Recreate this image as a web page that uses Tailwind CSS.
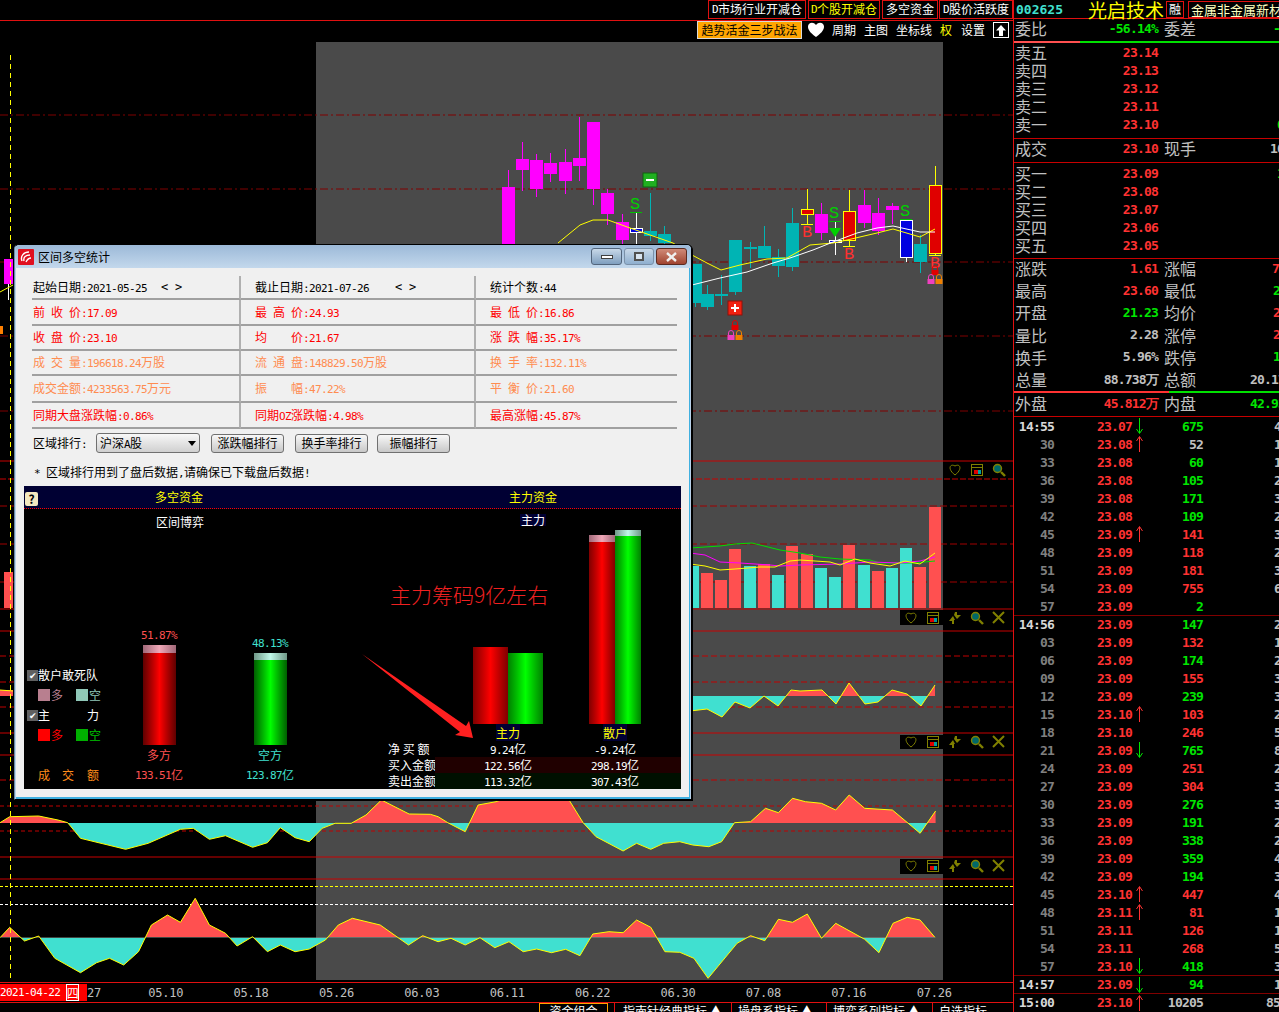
<!DOCTYPE html>
<html lang="zh">
<head>
<meta charset="UTF-8" />
<title>区间多空统计</title>
<script src="https://cdn.jsdelivr.net/npm/@tailwindcss/browser@4"></script>
</head>
<body class="bg-black overflow-hidden font-['Noto_Sans_CJK_SC',sans-serif] text-[12px] leading-none">
<div class="relative w-[1279px] h-[1012px] flex overflow-hidden">

  <!-- left: tabs, toolbar, chart, axis -->
  <div class="w-[1013px] flex flex-col shrink-0">
    <div class="h-[21px] border-b border-[#e01010] flex justify-end items-start text-white">
      <div data-sim class="w-[98px] h-[19px] pb-[1px] border border-[#e01010] flex items-center justify-center">D市场行业开减仓</div>
      <div data-sim class="w-[72px] h-[19px] pb-[1px] ml-[2px] border border-[#e01010] flex items-center justify-center text-[#ffff00]">D个股开减仓</div>
      <div data-sim class="w-[56px] h-[19px] pb-[1px] ml-[2px] border border-[#e01010] flex items-center justify-center">多空资金</div>
      <div data-sim class="w-[74px] h-[19px] pb-[1px] ml-[1px] border border-[#e01010] flex items-center justify-center">D股价活跃度</div>
    </div>
    <div class="h-[21px] pb-[3px] flex items-center justify-end pr-[4px] text-white">
      <div class="w-[105px] h-[18px] bg-[#ffa500] border border-[#d8d8d8] text-black flex items-center justify-center">趋势活金三步战法</div>
      <svg class="ml-[6px]" width="16" height="16" viewBox="0 0 16 16"><path d="M8 15C1 10 0 7 0 4.5C0 1 5 -1 8 3C11 -1 16 1 16 4.5C16 7 15 10 8 15Z" fill="#fff"/></svg>
      <span class="ml-[8px]">周期</span>
      <span class="ml-[8px]">主图</span>
      <span class="ml-[8px]">坐标线</span>
      <span class="ml-[8px] text-[#ffff00]">权</span>
      <span class="ml-[9px]">设置</span>
      <div class="ml-[8px] w-[16px] h-[16px] border border-white flex items-center justify-center">
        <svg width="10" height="11" viewBox="0 0 10 11"><path d="M5 0L10 5.5H7V11H3V5.5H0Z" fill="#fff"/></svg>
      </div>
    </div>
    <svg id="chart" class="block" width="1013" height="940" viewBox="0 42 1013 940"></svg>
    <div class="h-[20px] border-t border-[#e01010] flex items-center text-[#c0c0c0] font-['DejaVu_Sans_Mono',monospace] tracking-[-0.2px]">
      <div class="w-[87px] h-[17px] bg-[#ff0000] text-white flex items-center pl-[0px] tracking-[-0.6px] text-[11px]">2021-04-22<span class="ml-[6px] w-[13px] h-[17px] border border-white flex items-center justify-center font-['Noto_Sans_CJK_SC',sans-serif] tracking-normal text-[12px]">四</span></div>
      <div class="w-[36px]">27</div>
      <div class="w-[85.4px] text-center">05.10</div>
      <div class="w-[85.4px] text-center">05.18</div>
      <div class="w-[85.4px] text-center">05.26</div>
      <div class="w-[85.4px] text-center">06.03</div>
      <div class="w-[85.4px] text-center">06.11</div>
      <div class="w-[85.4px] text-center">06.22</div>
      <div class="w-[85.4px] text-center">06.30</div>
      <div class="w-[85.4px] text-center">07.08</div>
      <div class="w-[85.4px] text-center">07.16</div>
      <div class="w-[85.4px] text-center">07.26</div>
    </div>
    <div class="h-[10px] border-t border-[#e01010] flex text-white overflow-hidden whitespace-nowrap">
      <div class="w-[539px]"></div>
      <div class="w-[69px] h-[12px] border border-[#ffa500] pt-[1px] text-center">资金组合</div>
      <div class="ml-[6px] w-[117px] border-l border-[#e01010] pl-[8px] pt-[2px]">指南针经典指标 ▲</div>
      <div class="w-[95px] border-l border-[#e01010] pl-[6px] pt-[2px]">操盘系指标 ▲</div>
      <div class="w-[106px] border-l border-[#e01010] pl-[6px] pt-[2px]">博弈系列指标 ▲</div>
      <div class="border-l border-[#e01010] pl-[6px] pt-[2px]">自选指标</div>
    </div>
  </div>

  <!-- right: quote panel -->
  <div class="w-[266px] shrink-0 border-l border-[#e01010] flex flex-col overflow-hidden text-[#c0c0c0]">
    <div class="h-[19px] border-b border-[#e01010] flex items-center whitespace-nowrap shrink-0">
      <span class="ml-[2px] w-[72px] shrink-0 text-[#40e0d0] font-bold text-[13px] font-['DejaVu_Sans_Mono',monospace]">002625</span>
      <span class="text-[#ffff00] text-[19px] w-[78px] shrink-0">光启技术</span>
      <span class="w-[18px] h-[17px] shrink-0 border border-[#e01010] text-white flex items-center justify-center">融</span>
      <span class="ml-[4px] h-[17px] shrink-0 pl-[2px] pr-[20px] border border-[#e01010] text-[#ffffc0] text-[13px] flex items-center">金属非金属新材料</span>
    </div>
    <div id="quote"></div>
    <div id="ticks"></div>
  </div>

  <!-- dialog -->
  <div class="absolute left-[14px] top-[244px] w-[678px] h-[556px] rounded-t-[5px] border border-black border-l-[#6a8aa8] bg-[#b8d0e8] flex flex-col shadow-[1px_1px_0_#000]">
    <div class="h-[23px] shrink-0 flex items-center pl-[3px] bg-linear-to-b from-[#9cb9d8] to-[#c3d8ec] rounded-t-[5px]">
      <svg width="16" height="16" viewBox="0 0 16 16"><rect width="16" height="16" rx="1" fill="#e01020"/><path d="M4 12C2 7 6 3 11 3M6 12C5 8 8 6 12 6M8 13C9 11 11 9 13 9" stroke="#fff" stroke-width="1.4" fill="none"/></svg>
      <span class="ml-[4px] text-black">区间多空统计</span>
      <div class="ml-auto mr-[4px] flex gap-[2px]">
        <div class="w-[31px] h-[17px] rounded-[3px] border border-[#52657c] bg-linear-to-b from-[#c8d8e8] to-[#7f9fbf] flex items-center justify-center"><div class="w-[12px] h-[4px] bg-white border border-[#404040]"></div></div>
        <div class="w-[30px] h-[17px] rounded-[3px] border border-[#7a90a8] bg-linear-to-b from-[#c8d8e8] to-[#8fafcf] flex items-center justify-center"><div class="w-[10px] h-[9px] border-2 border-[#505050] bg-[#d8e4f0]"></div></div>
        <div class="w-[31px] h-[17px] rounded-[3px] border border-[#5c2a20] bg-linear-to-b from-[#d08a78] to-[#a04430] flex items-center justify-center">
          <svg width="13" height="10" viewBox="0 0 13 10"><path d="M2 1L11 9M11 1L2 9" stroke="#f0f0f0" stroke-width="2.4"/></svg>
        </div>
      </div>
    </div>
    <div class="mx-[1px] mr-[1px] flex-1 bg-[#f0f0f0] border-r border-[#40b0e0] border-b-2 border-b-[#40b0e0] pt-[8px] flex flex-col">
      <!-- stats table -->
      <div class="ml-[16px] w-[645px] grid grid-cols-[209px_235px_201px] grid-rows-[24px_26px_25px_25px_27px_26px] whitespace-pre">
        <div class="flex items-center border-b-2 border-b-[#a0a0a0] border-r-2 border-r-[#b0b0b0] pl-[1px] text-black"><span data-sim>起始日期:2021-05-25</span><span class="ml-[14px] font-['DejaVu_Sans_Mono',monospace] w-[14px]">&lt;</span><span class="font-['DejaVu_Sans_Mono',monospace]">&gt;</span></div>
        <div class="flex items-center border-b-2 border-b-[#a0a0a0] border-r-2 border-r-[#b0b0b0] pl-[14px] text-black"><span data-sim>截止日期:2021-07-26</span><span class="ml-[26px] font-['DejaVu_Sans_Mono',monospace] w-[14px]">&lt;</span><span class="font-['DejaVu_Sans_Mono',monospace]">&gt;</span></div>
        <div class="flex items-center border-b-2 border-b-[#a0a0a0] pl-[14px] text-black"><span data-sim>统计个数:44</span></div>

        <div class="flex items-center border-b-2 border-b-[#a0a0a0] border-r-2 border-r-[#b0b0b0] pl-[1px] text-[#ff0000]"><span data-sim>前 收 价:17.09</span></div>
        <div class="flex items-center border-b-2 border-b-[#a0a0a0] border-r-2 border-r-[#b0b0b0] pl-[14px] text-[#ff0000]"><span data-sim>最 高 价:24.93</span></div>
        <div class="flex items-center border-b-2 border-b-[#a0a0a0] pl-[14px] text-[#ff0000]"><span data-sim>最 低 价:16.86</span></div>

        <div class="flex items-center border-b-2 border-b-[#a0a0a0] border-r-2 border-r-[#b0b0b0] pl-[1px] text-[#ff0000]"><span data-sim>收 盘 价:23.10</span></div>
        <div class="flex items-center border-b-2 border-b-[#a0a0a0] border-r-2 border-r-[#b0b0b0] pl-[14px] text-[#ff0000]"><span data-sim>均    价:21.67</span></div>
        <div class="flex items-center border-b-2 border-b-[#a0a0a0] pl-[14px] text-[#ff0000]"><span data-sim>涨 跌 幅:35.17%</span></div>

        <div class="flex items-center border-b-2 border-b-[#a0a0a0] border-r-2 border-r-[#b0b0b0] pl-[1px] text-[#ff8c50]"><span data-sim>成 交 量:196618.24万股</span></div>
        <div class="flex items-center border-b-2 border-b-[#a0a0a0] border-r-2 border-r-[#b0b0b0] pl-[14px] text-[#ff8c50]"><span data-sim>流 通 盘:148829.50万股</span></div>
        <div class="flex items-center border-b-2 border-b-[#a0a0a0] pl-[14px] text-[#ff8c50]"><span data-sim>换 手 率:132.11%</span></div>

        <div class="flex items-center border-b-2 border-b-[#a0a0a0] border-r-2 border-r-[#b0b0b0] pl-[1px] text-[#ff8c50]"><span data-sim>成交金额:4233563.75万元</span></div>
        <div class="flex items-center border-b-2 border-b-[#a0a0a0] border-r-2 border-r-[#b0b0b0] pl-[14px] text-[#ff8c50]"><span data-sim>振    幅:47.22%</span></div>
        <div class="flex items-center border-b-2 border-b-[#a0a0a0] pl-[14px] text-[#ff8c50]"><span data-sim>平 衡 价:21.60</span></div>

        <div class="flex items-center border-b-2 border-b-[#a0a0a0] border-r-2 border-r-[#b0b0b0] pl-[1px] text-[#ff0000]"><span data-sim>同期大盘涨跌幅:0.86%</span></div>
        <div class="flex items-center border-b-2 border-b-[#a0a0a0] border-r-2 border-r-[#b0b0b0] pl-[14px] text-[#ff0000]"><span data-sim>同期OZ涨跌幅:4.98%</span></div>
        <div class="flex items-center border-b-2 border-b-[#a0a0a0] pl-[14px] text-[#ff0000]"><span data-sim>最高涨幅:45.87%</span></div>
      </div>

      <div class="mt-[4px] ml-[17px] h-[20px] flex items-center text-black">
        <span data-sim class="w-[63px]">区域排行:</span>
        <div class="w-[104px] h-[20px] border border-[#707070] rounded-[3px] bg-linear-to-b from-[#f8f8f8] to-[#d0d0d0] flex items-center pl-[3px] pr-[3px] justify-between"><span data-sim>沪深A股</span><svg width="8" height="5" viewBox="0 0 8 5"><path d="M0 0H8L4 5Z" fill="#000"/></svg></div>
        <div class="ml-[11px] w-[73px] h-[19px] border border-[#707070] rounded-[3px] bg-linear-to-b from-[#f8f8f8] to-[#c8c8c8] flex items-center justify-center">涨跌幅排行</div>
        <div class="ml-[11px] w-[73px] h-[19px] border border-[#707070] rounded-[3px] bg-linear-to-b from-[#f8f8f8] to-[#c8c8c8] flex items-center justify-center">换手率排行</div>
        <div class="ml-[9px] w-[73px] h-[19px] border border-[#707070] rounded-[3px] bg-linear-to-b from-[#f8f8f8] to-[#c8c8c8] flex items-center justify-center">振幅排行</div>
      </div>
      <div class="mt-[9px] ml-[18px] h-[20px] flex items-center text-black"><span data-sim>* 区域排行用到了盘后数据,请确保已下载盘后数据!</span></div>

      <!-- bar panel -->
      <div class="relative mt-[4px] ml-[8px] w-[657px] h-[303px] bg-black flex flex-col">
        <div class="h-[23px] bg-[#000033] border-b border-dotted border-[#ff0000] flex items-center text-[#ffff00] relative">
          <div class="w-[310px] text-center">多空资金</div>
          <div class="w-[51px]"></div>
          <div class="w-[296px] text-center">主力资金</div>
          <div class="absolute left-[1px] top-[6px] w-[13px] h-[14px] bg-[#f4e8c0] rounded-[2px] text-black font-bold text-center leading-[14px]">?</div>
        </div>
        <div class="flex-1 flex">
          <div class="w-[361px] flex flex-col">
            <div class="h-[26px] flex items-center justify-center w-[312px] text-white">区间博弈</div>
            <div class="flex-1 flex items-end pb-[4px]">
              <div class="w-[95px] pl-[3px] text-white">
                <div class="h-[20px] flex items-center"><span class="w-[11px] h-[11px] bg-[#606060] text-white text-[9px] flex items-center justify-center">✔</span>散户敢死队</div>
                <div class="h-[20px] flex items-center pl-[11px]"><span class="w-[12px] h-[12px] bg-[#b87f8f]"></span><span class="text-[#b87f8f] ml-[1px] w-[25px]">多</span><span class="w-[12px] h-[12px] bg-[#90c8b8]"></span><span class="text-[#90c8b8] ml-[1px]">空</span></div>
                <div class="h-[20px] flex items-center"><span class="w-[11px] h-[11px] bg-[#606060] text-white text-[9px] flex items-center justify-center">✔</span><span class="w-[49px]">主</span><span>力</span></div>
                <div class="h-[20px] flex items-center pl-[11px]"><span class="w-[12px] h-[12px] bg-[#ff0000]"></span><span class="text-[#ff0000] ml-[1px] w-[25px]">多</span><span class="w-[12px] h-[12px] bg-[#00b000]"></span><span class="text-[#00c000] ml-[1px]">空</span></div>
                <div class="mt-[20px] h-[20px] flex items-center pl-[11px] text-[#ff8c1a]"><span class="w-[24px]">成</span><span class="w-[25px]">交</span><span>额</span></div>
              </div>
              <div class="w-[80px] flex flex-col items-center">
                <div data-sim class="h-[20px] flex items-center text-[#ff5050]">51.87%</div>
                <div class="w-[33px] h-[8px] bg-linear-to-r from-[#a06878] via-[#f0a8b8] to-[#a06878]"></div>
                <div class="w-[33px] h-[92px] bg-linear-to-r from-[#600000] via-[#ff0000] to-[#600000]"></div>
                <div class="h-[20px] flex items-center text-[#ff5050]">多方</div>
                <div data-sim class="h-[20px] flex items-center text-[#ff5050]">133.51亿</div>
              </div>
              <div class="ml-[31px] w-[80px] flex flex-col items-center">
                <div data-sim class="h-[20px] flex items-center text-[#40e0d0]">48.13%</div>
                <div class="w-[33px] h-[7px] bg-linear-to-r from-[#709888] via-[#c0f8e8] to-[#709888]"></div>
                <div class="w-[33px] h-[85px] bg-linear-to-r from-[#006000] via-[#00ff00] to-[#006000]"></div>
                <div class="h-[20px] flex items-center text-[#40e0d0]">空方</div>
                <div data-sim class="h-[20px] flex items-center text-[#40e0d0]">123.87亿</div>
              </div>
            </div>
          </div>
          <div class="w-[296px] flex flex-col text-white">
            <div class="h-[21px] flex items-center justify-center"><span class="bg-[#000033] px-[1px]">主力</span></div>
            <div class="flex-1 grid grid-cols-[50px_146px_68px_32px] items-end pb-[1px]">
              <div></div>
              <div class="flex justify-center items-end">
                <div class="w-[35px] h-[77px] bg-linear-to-r from-[#800000] via-[#ff0000] to-[#800000]"></div>
                <div class="w-[35px] h-[71px] bg-linear-to-r from-[#008000] via-[#00ff00] to-[#008000]"></div>
              </div>
              <div class="flex justify-center items-end">
                <div class="w-[26px] h-[189px] flex flex-col"><div class="h-[7px] bg-linear-to-r from-[#a06878] via-[#f0a8b8] to-[#a06878]"></div><div class="flex-1 bg-linear-to-r from-[#800000] via-[#ff0000] to-[#800000]"></div></div>
                <div class="w-[26px] h-[194px] flex flex-col"><div class="h-[6px] bg-linear-to-r from-[#709888] via-[#c0f8e8] to-[#709888]"></div><div class="flex-1 bg-linear-to-r from-[#008000] via-[#00ff00] to-[#008000]"></div></div>
              </div>
            </div>
            <div class="grid grid-cols-[50px_146px_68px_32px] grid-rows-[16px_16px_16px_16px] items-center text-center whitespace-pre">
              <div></div><div class="text-[#ffff00]"><span class="bg-[#000033]">主力</span></div><div class="text-[#ffff00]"><span class="bg-[#000033]">散户</span></div><div></div>
              <div class="text-left pl-[3px]">净 买 额</div><div data-sim>9.24亿</div><div data-sim>-9.24亿</div><div></div>
              <div class="text-left pl-[3px] h-[16px] leading-[16px]">买入金额</div><div data-sim class="h-[16px] leading-[16px] bg-[#200000]">122.56亿</div><div data-sim class="h-[16px] leading-[16px] bg-[#200000]">298.19亿</div><div class="h-[16px] bg-[#200000]"></div>
              <div class="text-left pl-[3px] h-[16px] leading-[16px]">卖出金额</div><div data-sim class="h-[16px] leading-[16px] bg-[#001000]">113.32亿</div><div data-sim class="h-[16px] leading-[16px] bg-[#001000]">307.43亿</div><div class="h-[16px] bg-[#001000]"></div>
            </div>
          </div>
        </div>
        <!-- annotation drawn over the panel -->
        <div class="absolute left-[366px] top-[96px] text-[21px] leading-[24px] text-[#f02020] font-light whitespace-nowrap">主力筹码9亿左右</div>
        <svg class="absolute left-0 top-0" width="657" height="303" viewBox="0 0 657 303"><path d="M338 168L442 240L445 235L449 252L431 249L436 246Z" fill="#ff2020"/></svg>
      </div>
    </div>
  </div>
</div>

<script>
// mixed width text: ascii in half width cells next to 12px CJK
document.querySelectorAll('[data-sim]').forEach(function (el) {
  el.innerHTML = el.textContent.replace(/[\x20-\x7e]+/g, function (m) {
    return '<span class="font-[\'DejaVu_Sans_Mono\',monospace] text-[11px] tracking-[-0.62px]">' + m + '</span>'
  })
})

// ---- chart
var out = []
function line(y, color, dash, w) {
  out.push('<line x1="0" x2="1013" y1="' + y + '" y2="' + y + '" stroke="' + color + '" stroke-width="' + (w || 1) + '"' + (dash ? ' stroke-dasharray="' + dash + '"' : '') + '/>')
}
function rect(x, y, w, h, fill, stroke) {
  out.push('<rect x="' + x + '" y="' + y + '" width="' + w + '" height="' + h + '" fill="' + fill + '"' + (stroke ? ' stroke="' + stroke + '"' : '') + '/>')
}
function seg(x, y1, y2, color) {
  out.push('<line x1="' + x + '" x2="' + x + '" y1="' + y1 + '" y2="' + y2 + '" stroke="' + color + '" stroke-width="1"/>')
}
function label(x, y, t, color) {
  out.push('<text x="' + x + '" y="' + y + '" fill="' + color + '" text-anchor="middle" font-family="Liberation Mono" font-size="17">' + t + '</text>')
}
function poly(points, color, w) {
  out.push('<polyline points="' + points.map(function (p) { return p[0] + ',' + p[1] }).join(' ') + '" fill="none" stroke="' + color + '" stroke-width="' + (w || 1) + '"/>')
}
function lock(x, y, color) {
  rect(x - 3.5, y + 4, 7, 5, color)
  out.push('<path d="M' + (x - 2.5) + ' ' + (y + 4) + 'V' + (y + 2) + 'A2.5 2.5 0 0 1 ' + (x + 2.5) + ' ' + (y + 2) + 'V' + (y + 4) + '" fill="none" stroke="' + color + '"/>')
}
function badge(x, y, color, dark, plus) {
  rect(x, y, 14, 14, color, dark)
  rect(x + 3, y + 6, 8, 2, '#fff')
  if (plus) rect(x + 6, y + 3, 2, 8, '#fff')
}
function candle(x, wt, wb, bt, bb, kind) {
  var k = { m: ['#ff00ff', '#ff00ff', ''], c: ['#00b4b4', '#00b4b4', ''], r: ['#e00000', '#ffff00', '#ffff00'], b: ['#0000e0', '#ffffff', '#ffffff'] }[kind]
  seg(x + 0.5, wt, wb, k[1])
  if (k[2]) rect(x - 5.5, bt + 0.5, 12, bb - bt - 1, k[0], k[2])
  else rect(x - 6, bt, 13, bb - bt, k[0])
}
function area(pts, base, id) {
  var s = pts.map(function (p) { return p[0] + ',' + p[1] }).join(' ')
  var first = pts[0][0], last = pts[pts.length - 1][0]
  var closed = first + ',' + base + ' ' + s + ' ' + last + ',' + base
  out.push('<clipPath id="up' + id + '"><rect x="0" y="0" width="1013" height="' + base + '"/></clipPath>')
  out.push('<clipPath id="dn' + id + '"><rect x="0" y="' + base + '" width="1013" height="400"/></clipPath>')
  out.push('<polygon points="' + closed + '" fill="#ff5050" clip-path="url(#up' + id + ')"/>')
  out.push('<polygon points="' + closed + '" fill="#40e0d0" clip-path="url(#dn' + id + ')"/>')
  poly(pts, '#ffff00')
}
function ctrlIcons(x, y, full) {
  // x is the left edge of the heart
  var c = '#808000'
  out.push('<path d="M' + (x + 6) + ' ' + (y + 11) + 'C' + (x - 2) + ' ' + (y + 5) + ' ' + (x + 1) + ' ' + (y - 1) + ' ' + (x + 6) + ' ' + (y + 2) + 'C' + (x + 11) + ' ' + (y - 1) + ' ' + (x + 14) + ' ' + (y + 5) + ' ' + (x + 6) + ' ' + (y + 11) + 'Z" fill="none" stroke="' + c + '"/>')
  rect(x + 22.5, y + 0.5, 11, 11, 'none', c)
  out.push('<line x1="' + (x + 22) + '" x2="' + (x + 34) + '" y1="' + (y + 3.5) + '" y2="' + (y + 3.5) + '" stroke="' + c + '"/>')
  rect(x + 25, y + 6, 4, 4, '#e00000')
  rect(x + 29, y + 6, 3, 4, '#00a0a0')
  var dx = full ? 44 : 22
  if (full) {
    out.push('<path d="M' + (x + 44) + ' ' + (y + 9) + 'L' + (x + 48) + ' ' + (y + 4) + 'L' + (x + 50) + ' ' + (y + 8) + 'H' + (x + 49) + 'V' + (y + 12) + 'H' + (x + 47) + 'V' + (y + 9) + 'ZM' + (x + 50) + ' ' + y + 'H' + (x + 52) + 'V' + (y + 3) + 'H' + (x + 56) + 'L' + (x + 52) + ' ' + (y + 7) + 'L' + (x + 49) + ' ' + (y + 3) + 'Z" fill="' + c + '"/>')
  }
  var mx = x + dx + 22
  out.push('<circle cx="' + (mx + 4.5) + '" cy="' + (y + 4.5) + '" r="4" fill="#006868" stroke="' + c + '" stroke-width="1.4"/>')
  out.push('<line x1="' + (mx + 8) + '" y1="' + (y + 8) + '" x2="' + (mx + 12) + '" y2="' + (y + 12) + '" stroke="' + c + '" stroke-width="2.4"/>')
  if (full) {
    out.push('<path d="M' + (x + 88) + ' ' + y + 'L' + (x + 99) + ' ' + (y + 11) + 'M' + (x + 99) + ' ' + y + 'L' + (x + 88) + ' ' + (y + 11) + '" stroke="' + c + '" stroke-width="2"/>')
  }
}

rect(316, 42, 627, 938, '#4a4a4a')

// price band
;[115, 189, 262, 336, 411].forEach(function (y) { line(y, '#800000', '8 3 2 3') })
rect(4, 259, 9, 25, '#ff00ff')
seg(8.5, 284, 300, '#ffffff')
poly([[0, 292], [13, 285]], '#ffff00')
rect(0, 326, 3, 8, '#ff8000')

;[
  [508, 170, 244, 187, 244, 'm'], [522, 142, 191, 159, 170, 'm'], [536, 154, 197, 160, 189, 'm'],
  [550, 153, 182, 163, 174, 'm'], [565, 149, 194, 162, 181, 'm'], [579, 117, 181, 158, 166, 'm'],
  [593, 122, 205, 122, 189, 'm'], [607, 189, 225, 193, 214, 'm'], [622, 214, 244, 222, 240, 'm'],
  [636, 213, 244, 228, 233, 'b'], [650, 193, 241, 231, 236, 'c'], [664, 226, 244, 234, 243, 'c'],
  [695, 264, 307, 264, 303, 'c'], [707, 285, 310, 294, 307, 'c'], [721, 275, 305, 294, 296, 'c'],
  [735, 240, 295, 240, 292, 'c'], [750, 242, 268, 247, 249, 'c'], [764, 226, 258, 246, 258, 'c'],
  [778, 249, 277, 257, 266, 'c'], [792, 208, 271, 223, 267, 'c'], [807, 189, 224, 209, 215, 'r'],
  [821, 203, 240, 214, 233, 'm'], [835, 222, 255, 240, 243, 'b'], [849, 190, 246, 211, 241, 'r'],
  [864, 190, 228, 205, 223, 'm'], [878, 198, 235, 213, 231, 'm'], [892, 203, 224, 206, 210, 'm'],
  [906, 220, 262, 220, 258, 'b'], [920, 235, 273, 244, 262, 'c'], [935, 166, 255, 185, 254, 'r']
].forEach(function (c) { candle.apply(null, c) })

// short bars under the red candles and S / B marks
out.push('<path d="M801 224.5H813M843 246.5H855M929 255.5H941" stroke="#ffff00"/>')
out.push('<path d="M630 212.5H642M829 221.5H841M900 219.5H912" stroke="#00c000"/>')
out.push('<path d="M829 228H841L835 237Z" fill="#00d000"/>')
label(635, 209, 'S', '#00d000'); label(834, 218, 'S', '#00d000'); label(905, 216, 'S', '#00d000')
label(807, 237, 'B', '#ff3030'); label(849, 259, 'B', '#ff3030'); label(935, 268, 'B', '#ff3030')
badge(643, 173, '#20b020', '#106010', false)
badge(728, 301, '#f02010', '#901008', true)
lock(735, 321, '#e00000'); lock(731, 331, '#f040c0'); lock(739, 331, '#f08000')
lock(935, 266, '#e00000'); lock(931, 275, '#f040c0'); lock(939, 275, '#f08000')

// moving averages, read off the picture
poly([[558, 243], [580, 225], [593, 220], [608, 220], [630, 228], [650, 235], [673, 243], [692, 255], [707, 263], [721, 270], [740, 265], [767, 259], [787, 258], [810, 245], [833, 243], [847, 240], [877, 233], [893, 229], [920, 237], [935, 229]], '#ffff00')
poly([[692, 285], [720, 278], [747, 272], [773, 263], [790, 258], [813, 250], [833, 242], [857, 233], [877, 228], [893, 226], [920, 232], [935, 232]], '#ffffff')

// volume band
line(461, '#c80000')
line(479, '#c80000', '6 2')
;[506, 544, 582].forEach(function (y) { line(y, '#a00000', '7 3') })
rect(4, 572, 9, 36, '#ff5050')
;[
  [690, 9, 566, 'c'], [701, 12, 573, 'r'], [715, 12, 580, 'r'], [729, 12, 549, 'r'], [744, 12, 566, 'c'], [758, 12, 564, 'r'],
  [772, 12, 575, 'c'], [786, 12, 546, 'r'], [801, 12, 554, 'r'], [815, 12, 568, 'c'], [829, 12, 577, 'c'], [843, 12, 545, 'r'],
  [858, 12, 565, 'c'], [872, 12, 571, 'r'], [886, 12, 568, 'c'], [900, 12, 548, 'c'], [914, 12, 567, 'r'], [929, 12, 507, 'r']
].forEach(function (b) { rect(b[0], b[2], b[1], 608 - b[2], b[3] == 'r' ? '#ff5050' : '#40e0d0') })
poly([[690, 548], [720, 546], [735, 544], [752, 543], [760, 545], [780, 550], [800, 553], [820, 557], [840, 559], [870, 560], [880, 563], [900, 563], [915, 563], [935, 561]], '#00e000')
poly([[690, 553], [705, 555], [720, 562], [740, 563], [770, 565], [780, 566], [800, 565], [840, 564], [870, 562], [900, 563], [920, 561], [935, 557]], '#ff00ff')
poly([[690, 564], [705, 566], [720, 570], [735, 569], [760, 567], [775, 567], [790, 561], [800, 560], [830, 562], [840, 565], [855, 559], [870, 563], [890, 566], [905, 561], [920, 564], [935, 553]], '#ffff00')

// indicator bands
line(609, '#c80000'); line(631, '#c80000')
;[656, 682, 707].forEach(function (y) { line(y, '#c00000', '6 3') })
rect(0, 690, 13, 6, '#ff5050'); poly([[0, 690], [13, 691]], '#ffff00')
area([[690, 711], [707, 709], [722, 717], [735, 702], [750, 708], [764, 696], [778, 706], [791, 690], [800, 691], [822, 690], [836, 704], [849, 683], [865, 704], [878, 702], [892, 690], [907, 694], [921, 706], [935, 685]], 696, 1)

line(733, '#c80000'); line(755, '#c80000'); line(780, '#c00000', '6 3')
line(806, '#c00000', '4 3'); line(831, '#c00000', '4 3')
var band3 = [[0, 98], [15, 80], [60, 78], [90, 90], [105, 98], [125, 145], [195, 178], [230, 160], [280, 118], [300, 115], [325, 148], [350, 137], [392, 172], [415, 158], [435, 113], [458, 143], [480, 155], [500, 115], [520, 100], [545, 100], [568, 75], [592, 30], [635, 72], [668, 73], [680, 80], [695, 98], [722, 125], [742, 45], [770, 35], [790, 20], [880, 20], [905, 98], [925, 140], [967, 183], [988, 160], [1010, 178], [1030, 160], [1055, 155], [1075, 165], [1100, 170], [1120, 155], [1140, 98], [1165, 95], [1188, 55], [1208, 68], [1230, 25], [1250, 35], [1275, 40], [1297, 60], [1318, 15], [1342, 55], [1385, 60], [1428, 130], [1452, 63]]
area(band3.map(function (p) { return [+(p[0] / 1.552).toFixed(1), +(790 + p[1] / 3).toFixed(1)] }), 823, 2)

line(857, '#c80000'); line(879, '#c80000')
line(886.5, '#ffff00', '3 2'); line(904.5, '#ffffff', '3 2')
var band4 = [[0, 443], [15, 412], [38, 453], [60, 438], [85, 505], [125, 548], [150, 518], [170, 505], [192, 525], [215, 485], [235, 405], [260, 375], [280, 397], [303, 325], [325, 405], [350, 430], [368, 468], [392, 440], [415, 485], [435, 465], [458, 485], [480, 477], [505, 450], [525, 405], [547, 385], [590, 405], [634, 465], [656, 437], [680, 455], [700, 445], [722, 465], [745, 443], [768, 473], [790, 455], [812, 485], [833, 477], [856, 488], [878, 478], [900, 497], [920, 432], [945, 425], [967, 428], [988, 390], [1010, 412], [1032, 485], [1055, 487], [1077, 505], [1099, 565], [1144, 460], [1165, 437], [1187, 452], [1208, 388], [1230, 397], [1253, 372], [1275, 445], [1297, 400], [1342, 448], [1364, 488], [1386, 400], [1408, 382], [1428, 390], [1451, 442]]
area(band4.map(function (p) { return [+(p[0] / 1.552).toFixed(1), +(790 + p[1] / 3).toFixed(1)] }), 937.5, 3)

// crosshair on the left
out.push('<line x1="10.5" x2="10.5" y1="55" y2="980" stroke="#ffff00" stroke-dasharray="5 4"/>')

// panel controls
ctrlIcons(949, 464, false)
rect(900, 610, 43, 15, '#000'); ctrlIcons(905, 612, true)
rect(900, 735, 43, 14, '#000'); ctrlIcons(905, 736, true)
rect(900, 859, 43, 15, '#000'); ctrlIcons(905, 860, true)

document.getElementById('chart').innerHTML = out.join('')

// ---- quote panel
var RED = 'text-[#ff3232]', GRN = 'text-[#00e600]', GRY = 'text-[#c0c0c0]'
var NUM = "font-['DejaVu_Sans_Mono',monospace] font-bold text-[13px] tracking-[-0.8px]"
function qrow(h, l1, n, nc, l2, v, vc, pad) {
  return '<div class="flex items-center whitespace-nowrap ' + h + '">' +
    '<span class="w-[40px] shrink-0 pl-[1px] text-[16px]">' + l1 + '</span>' +
    '<span class="w-[104px] shrink-0 text-right ' + NUM + ' ' + nc + '">' + n + '</span>' +
    (l2 ? '<span class="ml-[6px] w-[34px] text-[16px] shrink-0">' + l2 + '</span>' : '<span class="ml-[6px] w-[34px] shrink-0"></span>') +
    '<span class="shrink-0 ' + pad + ' ' + NUM + ' ' + vc + '">' + v + '</span></div>'
}
var q = ''
q += qrow('h-[22px] pb-[4px]', '委比', '-56.14%', GRN, '委差', '-5', GRN, 'pl-[75px]')
q += '<div class="h-[2px] flex"><div class="w-[66px] bg-[#ff5050]"></div><div class="flex-1 bg-[#00e000]"></div></div>'
;[['卖五', '23.14'], ['卖四', '23.13'], ['卖三', '23.12'], ['卖二', '23.11'], ['卖一', '23.10']].forEach(function (r, i) {
  q += qrow('h-[18px]', r[0], r[1], RED, '', i == 4 ? '0' : '', GRN, 'pl-[79px]')
})
q += '<div class="h-[6px] border-b border-[#c80000]"></div>'
q += qrow('h-[21px] pb-[3px]', '成交', '23.10', RED, '现手', '10', GRY, 'pl-[72px]')
q += '<div class="h-[3px] mb-[1px] border-b border-[#c80000]"></div>'
;[['买一', '23.09'], ['买二', '23.08'], ['买三', '23.07'], ['买四', '23.06'], ['买五', '23.05']].forEach(function (r, i) {
  q += qrow('h-[18px]', r[0], r[1], RED, '', i == 0 ? '1' : '', GRN, 'pl-[79px]')
})
q += '<div class="h-[5px] border-b border-[#c80000]"></div>'
q += '<div class="-mt-[2px]">'
q += qrow('h-[22.2px]', '涨跌', '1.61', RED, '涨幅', '7', RED, 'pl-[74px]')
q += qrow('h-[22.2px]', '最高', '23.60', RED, '最低', '2', GRN, 'pl-[75px]')
q += qrow('h-[22.2px]', '开盘', '21.23', GRN, '均价', '2', RED, 'pl-[75px]')
q += qrow('h-[22.2px]', '量比', '2.28', GRY, '涨停', '2', RED, 'pl-[75px]')
q += qrow('h-[22.2px]', '换手', '5.96%', GRY, '跌停', '1', GRN, 'pl-[75px]')
q += qrow('h-[22.2px]', '总量', '88.738万', GRY, '总额', '20.17', GRY, 'pl-[52px]')
q += '</div>'
q += '<div class="h-[2px] mt-[1px] flex"><div class="w-[155px] bg-[#ff3232]"></div><div class="flex-1 bg-[#00e000]"></div></div>'
q += qrow('h-[23px] pb-[3px]', '外盘', '45.812万', RED, '内盘', '42.93', GRN, 'pl-[52px]')
q += '<div class="h-[1px] bg-[#c80000]"></div>'
document.getElementById('quote').innerHTML = q

// ---- tick list: time, price, arrow, volume, volume colour, trades
var ticks = [
  ['14:55', '23.07', 'd', '675', 'g', '4'], ['30', '23.08', 'u', '52', 'w', '1'], ['33', '23.08', '', '60', 'g', '1'],
  ['36', '23.08', '', '105', 'g', '2'], ['39', '23.08', '', '171', 'g', '3'], ['42', '23.08', '', '109', 'g', '2'],
  ['45', '23.09', 'u', '141', 'r', '3'], ['48', '23.09', '', '118', 'r', '2'], ['51', '23.09', '', '181', 'r', '3'],
  ['54', '23.09', '', '755', 'r', '6'], ['57', '23.09', '', '2', 'g', ''],
  ['14:56', '23.09', '', '147', 'g', '2'], ['03', '23.09', '', '132', 'r', '1'], ['06', '23.09', '', '174', 'g', '2'],
  ['09', '23.09', '', '155', 'r', '3'], ['12', '23.09', '', '239', 'g', '3'], ['15', '23.10', 'u', '103', 'r', '2'],
  ['18', '23.10', '', '246', 'r', '5'], ['21', '23.09', 'd', '765', 'g', '8'], ['24', '23.09', '', '251', 'r', '2'],
  ['27', '23.09', '', '304', 'r', '3'], ['30', '23.09', '', '276', 'g', '3'], ['33', '23.09', '', '191', 'g', '2'],
  ['36', '23.09', '', '338', 'g', '2'], ['39', '23.09', '', '359', 'g', '4'], ['42', '23.09', '', '194', 'g', '3'],
  ['45', '23.10', 'u', '447', 'r', '4'], ['48', '23.11', 'u', '81', 'r', '1'], ['51', '23.11', '', '126', 'r', '1'],
  ['54', '23.11', '', '268', 'r', '5'], ['57', '23.10', 'd', '418', 'g', '3'],
  ['14:57', '23.09', 'd', '94', 'g', '1'], ['15:00', '23.10', 'u', '10205', 'w', '85']
]
var UP = '<svg width="7" height="16" viewBox="0 0 7 16"><path d="M3.5 16V1M0.5 5L3.5 0.5L6.5 5" fill="none" stroke="#ff3232"/></svg>'
var DN = '<svg width="7" height="16" viewBox="0 0 7 16"><path d="M3.5 0V15M0.5 11L3.5 15.5L6.5 11" fill="none" stroke="#00e600"/></svg>'
document.getElementById('ticks').innerHTML = ticks.map(function (t) {
  var full = t[0].length > 2
  var vc = t[4] == 'g' ? GRN : t[4] == 'r' ? RED : GRY
  return '<div class="h-[18px] flex items-center whitespace-nowrap overflow-hidden ' + (full && t[0] != '14:55' ? 'border-t border-[#800000]' : '') + '">' +
    '<span class="w-[40px] shrink-0 text-right ' + NUM + ' ' + (full ? 'text-[#d8d8d8]' : 'text-[#808080]') + '">' + t[0] + '</span>' +
    '<span class="ml-[43px] w-[37px] shrink-0 ' + NUM + ' ' + RED + '">' + t[1] + '</span>' +
    '<span class="ml-[2px] w-[7px] shrink-0 flex">' + (t[2] == 'u' ? UP : t[2] == 'd' ? DN : '') + '</span>' +
    '<span class="w-[60px] shrink-0 text-right ' + NUM + ' ' + vc + '">' + t[3] + '</span>' +
    '<span class="' + (t[5].length > 1 ? 'ml-[63px]' : 'ml-[71px]') + ' shrink-0 ' + NUM + ' ' + GRY + '">' + t[5] + '</span></div>'
}).join('')
</script>
</body>
</html>
